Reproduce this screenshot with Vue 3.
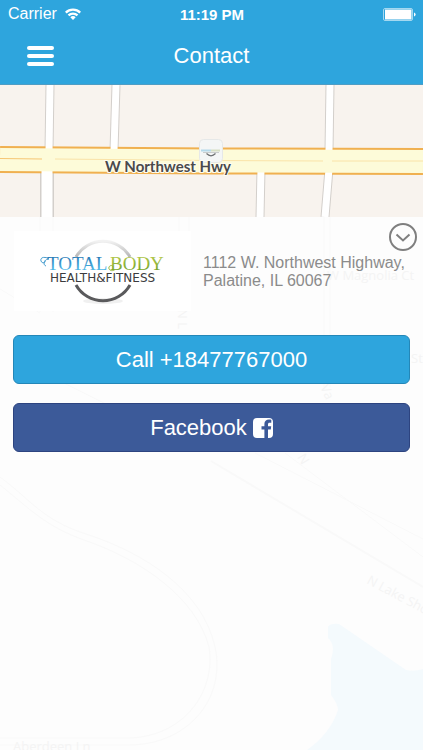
<template>
  <div class="contact-page">
    <header class="header">
      <div class="status-bar">
        <div class="carrier">
          <span>Carrier</span>
          <svg class="wifi" viewBox="0 0 16 12" aria-hidden="true">
            <path d="M0 3.800a11.400 11.400 0 0 1 16 0L14.400 5.500a9 9 0 0 0-12.800 0z" />
            <path d="M2.700 6.600a7.600 7.600 0 0 1 10.600 0L11.700 8.200a5.300 5.300 0 0 0-7.400 0z" />
            <path d="M5.300 9.200a3.900 3.900 0 0 1 5.400 0L8 12z" />
          </svg>
        </div>
        <span class="time">11:19 PM</span>
        <div class="battery-wrap">
          <svg class="battery" viewBox="0 0 33 13" aria-hidden="true">
            <rect x="0.5" y="0.5" width="29" height="12" rx="1.5" fill="none" stroke="#a5d8f0" />
            <rect x="2" y="1.500" width="26.500" height="10" fill="#fff" />
            <path d="M31 4.500q1.600 0.600 1.600 2t-1.600 2z" fill="#fff" />
          </svg>
        </div>
      </div>
      <div class="nav-bar">
        <button class="menu-button" type="button" aria-label="Menu">
          <span></span>
          <span></span>
          <span></span>
        </button>
        <h1 class="title">Contact</h1>
      </div>
    </header>

    <!-- Map strip -->
    <section class="map" aria-label="Map">
      <svg class="map-canvas" viewBox="0 0 423 132" preserveAspectRatio="xMidYMid slice">
        <rect width="423" height="132" fill="#f8f3ee" />
        <g fill="none">
          <path v-for="road in streets" :key="road" :d="road" stroke="#d3cfcb" stroke-width="9" />
          <path d="M47 80V132" stroke="#d3cfcb" stroke-width="14" />
          <path :d="highway" stroke="#f0b050" stroke-width="27" />
          <path v-for="road in streets" :key="'top' + road" :d="road" stroke="#fff" stroke-width="7" />
          <path d="M47 80V132" stroke="#fff" stroke-width="11" />
          <path :d="highway" stroke="#fdfbd9" stroke-width="23" />
          <path d="M0 73.500L42 74" stroke="#f6c673" />
          <path d="M55 74L211 75.500L323 76M332 76H423" stroke="#fae3a8" />
        </g>
        <!-- Place marker -->
        <g transform="translate(199 54)">
          <rect x="0.5" y="0.5" width="23" height="23" rx="4" fill="#f4f6f6" stroke="#e6e8e8" />
          <path d="M2 11.500h10" stroke="#b4d9ea" stroke-width="2" />
          <path d="M12 11.500h9" stroke="#d6dfc4" stroke-width="2" />
          <path d="M4 13.500h16" stroke="#c9cccc" />
          <path d="M7.500 14.500q4.500 4.500 9 0" stroke="#6b6e70" stroke-width="1.200" fill="none" />
        </g>
        <text x="168" y="87" class="road-name">W Northwest Hwy</text>
      </svg>
    </section>

    <main class="details">
      <!-- Faded part of the map below the strip -->
      <svg class="backdrop" viewBox="0 0 423 533" preserveAspectRatio="xMidYMin slice" aria-hidden="true">
        <g fill="none" stroke="#f9f9f9" stroke-width="1">
          <path d="M40 0V95M53 0V95M324 0V170M330 0V170M179 0V90M189 0V90" />
          <path d="M0 260C30 282 42 303 86 317C145 336 203 374 215 430C226 480 190 527 130 528H0" />
          <path d="M0 268C30 292 45 309 84 323C140 342 196 380 209 430C216 475 184 519 130 521H0" />
          <path d="M0 72L40 96M60 164L110 189M255 236L423 322M285 236L423 340" />
          <path d="M211 244L423 370" stroke-width="2" />
        </g>
        <path d="M328 410Q330 406 339 407L406 453Q414 455 423 452V533H307Q330 517 338 493Q338 487 331 478V442Q336 428 328 421z" fill="#f4fafd" />
        <g class="faded-names">
          <text x="13" y="534">Aberdeen Ln</text>
          <text x="327" y="63">W Magnolia Ct</text>
          <text transform="translate(366 366) rotate(28)">N Lake Shore Dr</text>
          <text transform="translate(178 92) rotate(90)">N L</text>
          <text transform="translate(320 170) rotate(65)">Va</text>
          <text transform="translate(297 240) rotate(60)">N</text>
          <text x="411" y="146">St</text>
        </g>
      </svg>

      <div class="content">
        <div class="info">
          <div class="logo">
            <svg class="logo-art" viewBox="0 0 130 70" role="img" aria-label="Total Body Health and Fitness">
              <defs>
                <linearGradient id="ring" x1="0" y1="0" x2="0" y2="1">
                  <stop offset="0" stop-color="#f2f2f2" />
                  <stop offset="1" stop-color="#b5b5b5" />
                </linearGradient>
                <linearGradient id="blue" x1="0" y1="0" x2="0" y2="1">
                  <stop offset="0.200" stop-color="#2a7cb8" />
                  <stop offset="0.800" stop-color="#4fb8e6" />
                </linearGradient>
                <linearGradient id="green" x1="0" y1="0" x2="0" y2="1">
                  <stop offset="0.200" stop-color="#b0c64a" />
                  <stop offset="0.800" stop-color="#7aa52a" />
                </linearGradient>
              </defs>
              <ellipse cx="65" cy="66" rx="20" ry="3" fill="#f0f0f0" />
              <path d="M38 22A31 31 0 0 1 92 22" fill="none" stroke="url(#ring)" stroke-width="3" />
              <path d="M38 50A31 31 0 0 0 92 50" fill="none" stroke="#5a5a5c" stroke-width="3" />
              <path d="M11 23.500C5 21 2 23 3 26C4 29 8 28 7 25.500M11 24C6 24 4.500 30 8 31" fill="none" stroke="#4a9fd0" stroke-width="1" />
              <text x="9" y="35" class="logo-name" fill="url(#blue)">TOTAL</text>
              <text x="72" y="35" class="logo-name" fill="url(#green)">BODY</text>
              <path d="M77 34.500C74 37 70 35 71 32C72 30 75 30 75 32" fill="none" stroke="#98b83c" stroke-width="1" />
              <text x="12" y="47" class="logo-tag">HEALTH&amp;FITNESS</text>
            </svg>
          </div>
          <address class="address">
            1112 W. Northwest Highway,<br />
            Palatine, IL 60067
          </address>
          <button class="toggle" type="button" aria-label="Collapse">
            <svg viewBox="0 0 28 28" aria-hidden="true">
              <circle cx="14" cy="14" r="13" />
              <path d="M7.500 11.500L14 17.500L20.500 11.500" />
            </svg>
          </button>
        </div>

        <div class="actions">
          <a class="action call" :href="'tel:' + phone">Call {{ phone }}</a>
          <a class="action facebook" href="#facebook">
            <span>Facebook</span>
            <svg class="facebook-icon" viewBox="0 0 20 20" aria-hidden="true">
              <path d="M4 0H16a4 4 0 0 1 4 4V16a4 4 0 0 1-4 4H15V11.500H17.800L18.200 8.300H15V6.500C15 5.400 15.400 4.800 16.700 4.800H18.300V1.700C17.800 1.600 16.900 1.500 15.900 1.500C13.200 1.500 11.400 3.100 11.400 6V8.300H8.500V11.500H11.400V20H4a4 4 0 0 1-4-4V4a4 4 0 0 1 4-4z" />
            </svg>
          </a>
        </div>
      </div>
    </main>
  </div>
</template>

<script setup>
import { ref } from 'vue'

const phone = ref('+18477767000')

const highway = 'M0 74.5L211 76L423 76.5'

// Side streets crossing the highway
const streets = [
  'M50 0L49 66',
  'M116 0L114 66',
  'M330 0L329 66',
  'M261 84L260 132',
  'M329 84L325 132'
]
</script>

<style>
body {
  margin: 0;
}
</style>

<style scoped>
.contact-page {
  display: flex;
  flex-direction: column;
  min-height: 100vh;
  background: #fdfdfd;
  font-family: "Liberation Sans", Arial, sans-serif;
}

/* Header */
.header {
  background: #2ea5dd;
  border-bottom: 1px solid #4f9dc4;
  color: #fff;
}

.status-bar {
  display: grid;
  grid-template-columns: 1fr auto 1fr;
  align-items: center;
  height: 28px;
  padding: 0 7px 0 8px;
  font-size: 16px;
}

.carrier {
  display: flex;
  align-items: center;
  gap: 8px;
}

.wifi {
  width: 16px;
  height: 12px;
  fill: #fff;
}

.time {
  font-size: 15px;
  font-weight: bold;
}

.battery-wrap {
  display: flex;
  justify-content: flex-end;
}

.battery {
  width: 33px;
  height: 13px;
}

.nav-bar {
  display: grid;
  grid-template-columns: 1fr auto 1fr;
  align-items: center;
  height: 56px;
  padding: 0 27px;
}

.menu-button {
  display: flex;
  flex-direction: column;
  gap: 4px;
  width: 27px;
  padding: 0;
  border: 0;
  background: none;
  cursor: pointer;
}

.menu-button span {
  width: 100%;
  height: 4px;
  border-radius: 2px;
  background: #fff;
}

.title {
  margin: 0;
  font-size: 22px;
  font-weight: normal;
}

/* Map */
.map {
  height: 132px;
  overflow: hidden;
}

.map-canvas {
  display: block;
  width: 100%;
  height: 100%;
}

.road-name {
  font-family: Lato, "Open Sans", sans-serif;
  font-size: 15px;
  font-weight: bold;
  text-anchor: middle;
  fill: #4a4a4c;
  stroke: #fffdf0;
  stroke-width: 2px;
  paint-order: stroke;
}

/* Details */
.details {
  position: relative;
  flex: 1;
  overflow: hidden;
}

.backdrop {
  position: absolute;
  inset: 0;
  width: 100%;
  height: 100%;
}

.faded-names {
  font-family: "Open Sans", "Noto Sans", sans-serif;
  font-size: 13px;
  fill: #f4f4f4;
}

.content {
  position: relative;
}

.info {
  display: flex;
  padding: 14px 14px 0 14px;
}

.logo {
  display: flex;
  justify-content: center;
  flex: 0 0 177px;
  height: 80px;
  background: #fff;
}

.logo-art {
  width: 130px;
  height: 70px;
  margin-top: 4px;
}

.logo-name {
  font-family: "Liberation Serif", serif;
  font-size: 19px;
}

.logo-tag {
  font-family: "DejaVu Sans", sans-serif;
  font-size: 12px;
  fill: #3b3b3d;
}

.address {
  flex: 1;
  padding: 23px 0 0 12px;
  color: #8b8b8b;
  font-size: 16px;
  font-style: normal;
  line-height: 18px;
  white-space: nowrap;
}

/* Sits over the corner of the address block */
.toggle {
  position: absolute;
  top: 6px;
  right: 6px;
  width: 28px;
  height: 28px;
  padding: 0;
  border: 0;
  background: none;
  cursor: pointer;
}

.toggle svg {
  display: block;
  fill: none;
  stroke: #7f7f7f;
  stroke-width: 2;
}

.actions {
  display: flex;
  flex-direction: column;
  gap: 19px;
  padding: 24px 13px;
}

.action {
  display: flex;
  align-items: center;
  justify-content: center;
  gap: 6px;
  box-sizing: border-box;
  height: 49px;
  border: 1px solid;
  border-radius: 6px;
  color: #fff;
  font-size: 22px;
  text-decoration: none;
}

.call {
  background: #2ea5dd;
  border-color: #2487b8;
}

.facebook {
  background: #3c5a99;
  border-color: #2d4480;
}

.facebook-icon {
  width: 20px;
  height: 20px;
  fill: #fff;
}
</style>
